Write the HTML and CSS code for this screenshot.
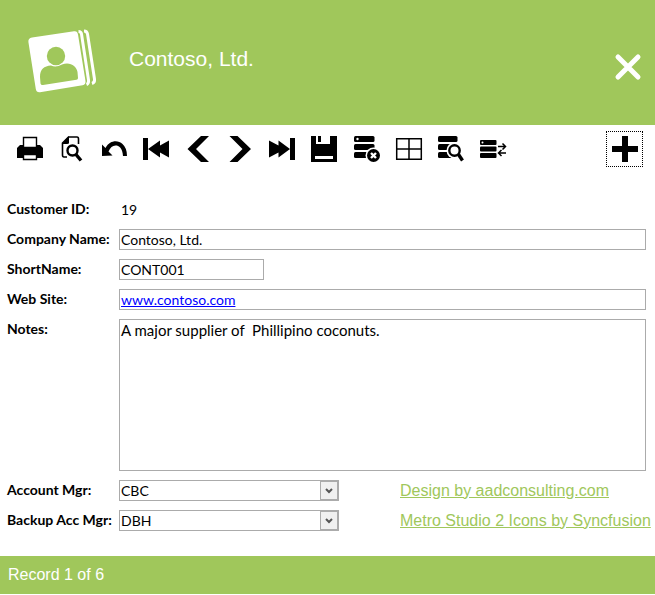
FILE: index.html
```html
<!DOCTYPE html>
<html lang="en">
<head>
<meta charset="utf-8">
<title>Contoso, Ltd.</title>
<link rel="stylesheet" href="styles.css">
</head>
<body>
<header class="banner">
  <svg class="logo" viewBox="0 0 72 68" aria-hidden="true">
    <path class="white" d="M6 10.500L48 4.200Q51.500 3.700 52 7.500L59.500 54Q60 57.500 56.500 58.200L14 65.200Q10.500 65.700 9.800 62L2.400 15Q2 11.200 6 10.500Z"/>
    <path class="edge" d="M52.500 4.500Q55 4.500 55.500 7L62.500 53Q63 56.500 60.500 57.500M58 4Q61 4 61.500 7L68.500 52Q69 55.500 66 56.500"/>
    <circle class="green" cx="30" cy="29" r="9.200"/>
    <path class="green" d="M14.500 56.500L14 50C14 42 18 39 25 38.500Q30 41 36 37.500C44 34.500 50.500 39 51.500 45L52 51Q52 52.500 50.500 52.800L17 58Q15 58.300 14.500 56.500Z"/>
  </svg>
  <h1 class="title">Contoso, Ltd.</h1>
  <button class="close" type="button" aria-label="Close">
    <svg class="cross" viewBox="0 0 28 28"><path d="M4 4L24 24M24 4L4 24"/></svg>
  </button>
</header>
<nav class="toolbar" aria-label="Record tools">
  <button class="tool" type="button" aria-label="Print"><svg class="icon" viewBox="0 0 28 28"><path d="M4 10H24L27 13V23H1V13Z"/><path class="paper" d="M7.500 2.500H20.500V12.500H7.500ZM7.500 19.500H20.500V24.500H7.500Z"/></svg></button>
  <button class="tool" type="button" aria-label="Preview"><svg class="icon" viewBox="0 0 28 28"><path class="line" d="M9 22H6Q4.500 22 4.500 20V8L10.500 2H19Q20.500 2 20.500 4V9"/><path d="M4 9L11 1V8Q11 9 9 9Z"/><circle class="lens" cx="14.500" cy="15.500" r="5"/><path class="handle" d="M18 19.500L23 25.500"/></svg></button>
  <button class="tool" type="button" aria-label="Undo"><svg class="icon" viewBox="0 0 28 28"><path d="M2 9.500L5.500 13C10 5 18 5 22.500 9Q27 13 27 21H23C22.500 13 19 10.500 15.500 10.500Q11 10.500 8.500 16.500L12.500 20.500L2 21Z"/></svg></button>
  <button class="tool" type="button" aria-label="First record"><svg class="icon" viewBox="0 0 28 28"><path d="M1 3H6V25H1ZM6 14L18 5.500V10.500L27 5.500V22.500L18 17.500V22.500Z"/></svg></button>
  <button class="tool" type="button" aria-label="Previous record"><svg class="icon" viewBox="0 0 28 28"><path d="M17 1H25L12 14L25 27H17L3.500 14Z"/></svg></button>
  <button class="tool" type="button" aria-label="Next record"><svg class="icon" viewBox="0 0 28 28"><path d="M3.500 1H11.500L25 14L11.500 27H3.500L16.500 14Z"/></svg></button>
  <button class="tool" type="button" aria-label="Last record"><svg class="icon" viewBox="0 0 28 28"><path d="M27 3H22V25H27ZM22 14L10.500 5.500V10.500L1 5.500V22.500L10.500 17.500V22.500Z"/></svg></button>
  <button class="tool" type="button" aria-label="Save"><svg class="icon" viewBox="0 0 28 28"><path d="M1 1H27V27H1Z"/><path class="white" d="M6 1H20V9H6ZM5 21H23V24H5Z"/><path d="M8 1H11V7H8Z"/></svg></button>
  <button class="tool" type="button" aria-label="Delete record"><svg class="icon" viewBox="0 0 28 28"><rect x="2" y="1" width="20.500" height="6" rx="1.500"/><rect x="2" y="9" width="20.500" height="6" rx="1.500"/><rect x="2" y="17" width="20.500" height="6" rx="1.500"/><circle class="white" cx="5.500" cy="4" r="1.200"/><circle class="white" cx="21.500" cy="20.500" r="8"/><circle cx="21.500" cy="20.500" r="6.500"/><path class="mark" d="M19 18L24 23M24 18L19 23"/></svg></button>
  <button class="tool" type="button" aria-label="Table view"><svg class="icon" viewBox="0 0 28 28"><path class="grid-line" d="M2.700 3.700H27.300V24.300H2.700ZM15 4V24M3 14H27"/></svg></button>
  <button class="tool" type="button" aria-label="Find record"><svg class="icon" viewBox="0 0 28 28"><rect x="2" y="1" width="19.500" height="6" rx="1.500"/><rect x="2" y="9" width="19.500" height="6" rx="1.500"/><rect x="2" y="17" width="19.500" height="6" rx="1.500"/><circle class="white" cx="18.500" cy="15.500" r="8"/><path class="halo" d="M22 19.500L27 25.500"/><circle class="lens" cx="18.500" cy="15.500" r="5.200"/><path class="handle" d="M22.500 19.500L26.500 25.500"/></svg></button>
  <button class="tool" type="button" aria-label="Sync records"><svg class="icon" viewBox="0 0 28 28"><rect x="2" y="5" width="16.500" height="5" rx="1"/><rect x="2" y="11.500" width="16.500" height="5" rx="1"/><rect x="2" y="18" width="16.500" height="5" rx="1"/><circle class="white" cx="4.500" cy="7.500" r="1"/><path class="arrow" d="M20 11.500H27M24.500 8.500L27.500 11.500L24.500 14.500M28 18H21M23.500 15L20.500 18L23.500 21"/></svg></button>
  <button class="add" type="button" aria-label="Add record"><svg class="icon" viewBox="0 0 28 28"><path d="M11 1H17V11H27V17H17V27H11V17H1V11H11Z"/></svg></button>
</nav>
<main class="content">
  <form class="form">
    <label class="label" for="customer">Customer ID:</label>
    <output class="value" id="customer">19</output>
    <label class="label" for="company">Company Name:</label>
    <input class="field" id="company" type="text" value="Contoso, Ltd.">
    <label class="label" for="short">ShortName:</label>
    <input class="field short" id="short" type="text" value="CONT001">
    <span class="label">Web Site:</span>
    <div class="field"><a class="site" href="#">www.contoso.com</a></div>
    <label class="label" for="notes">Notes:</label>
    <textarea class="field notes" id="notes">A major supplier of  Phillipino coconuts.</textarea>
    <label class="label" for="manager">Account Mgr:</label>
    <div class="pair">
      <div class="combo"><select class="field" id="manager"><option>CBC</option></select><span class="drop"><svg class="caret" viewBox="0 0 8 6"><path d="M1 1L4 4L7 1"/></svg></span></div>
      <a class="credit" href="#">Design by aadconsulting.com</a>
    </div>
    <label class="label" for="backup">Backup Acc Mgr:</label>
    <div class="pair">
      <div class="combo"><select class="field" id="backup"><option>DBH</option></select><span class="drop"><svg class="caret" viewBox="0 0 8 6"><path d="M1 1L4 4L7 1"/></svg></span></div>
      <a class="credit" href="#">Metro Studio 2 Icons by Syncfusion</a>
    </div>
  </form>
</main>
<footer class="status">Record 1 of 6</footer>
</body>
</html>
```
FILE: styles.css
```css
* { box-sizing: border-box; }
body {
  margin: 0;
  background: #fff;
  color: #000;
  font-family: Lato, sans-serif;
  font-size: 14px;
}
button { border: 0; padding: 0; background: none; }
svg { display: block; }

.banner {
  display: flex;
  align-items: center;
  padding: 27px 13px 30px 26px;
  background: #a0c75b;
}
.logo { width: 72px; height: 68px; }
.title {
  margin: 0 auto 4px 31px;
  color: #fff;
  font: 21px/24px "Liberation Sans", sans-serif;
}
.close { margin-top: 12px; }
.cross { width: 28px; height: 28px; fill: none; stroke: #fff; stroke-width: 5; stroke-linecap: round; }
.white { fill: #fff; }
.green { fill: #a0c75b; }
.edge { fill: none; stroke: #fff; stroke-width: 3; }

.toolbar {
  display: flex;
  align-items: center;
  height: 48px;
  padding: 0 12px 0 9px;
}
.tool { display: flex; justify-content: center; width: 42px; }
.add {
  display: flex;
  align-items: center;
  justify-content: center;
  width: 37px;
  height: 36px;
  margin-left: auto;
  border: 1px dotted #000;
}
.icon { flex: none; width: 28px; height: 28px; overflow: visible; }
.paper { fill: #fff; stroke: #000; stroke-width: 1.4; }
.line { fill: none; stroke: #000; stroke-width: 1.6; }
.lens { fill: #fff; stroke: #000; stroke-width: 2.4; }
.handle { stroke: #000; stroke-width: 3.4; }
.halo { stroke: #fff; stroke-width: 6; }
.mark { stroke: #fff; stroke-width: 2.4; }
.grid-line { fill: none; stroke: #000; stroke-width: 1.5; }
.arrow { fill: none; stroke: #000; stroke-width: 1.5; }

.content { padding: 26px 9px 25px 7px; }
.form {
  display: grid;
  grid-template-columns: 112px minmax(0, 1fr);
  row-gap: 9px;
}
.label { font-weight: 700; line-height: 20px; white-space: nowrap; }
.value { padding-left: 2px; line-height: 22px; height: 21px; }
.field {
  width: 100%;
  height: 21px;
  margin: 0;
  padding: 0 1px;
  border: 1px solid #ababab;
  border-radius: 0;
  background: #fff;
  color: #000;
  font: 14px/20px Lato, sans-serif;
}
.short { width: 145px; }
.site { color: #00f; }
.notes { display: block; height: 152px; font-size: 15px; resize: none; }
.pair { display: flex; align-items: center; gap: 61px; }
.combo { position: relative; flex: none; width: 220px; }
.combo .field { display: block; appearance: none; }
.drop {
  position: absolute;
  top: 1px;
  right: 1px;
  bottom: 1px;
  display: flex;
  align-items: center;
  justify-content: center;
  width: 18px;
  border: 1px solid #ababab;
  background: #f0f0f0;
  pointer-events: none;
}
.caret { width: 8px; height: 6px; fill: none; stroke: #555; stroke-width: 2; }
.credit { color: #a0c75b; font: 16px/20px "Liberation Sans", sans-serif; white-space: nowrap; }
.status {
  padding: 9px 8px;
  background: #a0c75b;
  color: #fff;
  font: 16px/20px "Liberation Sans", sans-serif;
}
```
